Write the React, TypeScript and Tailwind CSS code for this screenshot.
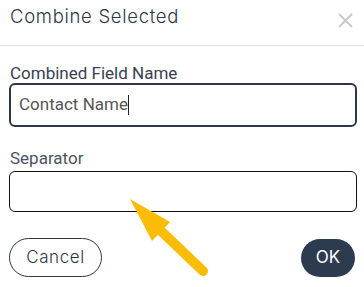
import React from 'react';

const App: React.FC = () => {
  const [separator, setSeparator] = React.useState('');

  return (
    <div className="relative w-[364px] h-[287px] bg-white overflow-hidden">
      <div className="h-[46px] flex items-start justify-between pl-[10px] pr-[11px] pt-[4px] border-b border-[#e6e6e6]">
        <h2
          className="text-[18.5px] leading-[24px] tracking-[0.7px] font-light text-[#2d3748]"
          style={{ fontFamily: 'Inter, sans-serif' }}
        >
          Combine Selected
        </h2>
        <button className="mt-[9px] text-[#c8c8c8]">
          <svg width="15" height="15" viewBox="0 0 15 15" fill="none" stroke="currentColor" strokeWidth="1.8">
            <path d="M1 1 L14 14 M14 1 L1 14" />
          </svg>
        </button>
      </div>

      <div className="px-[9px] pt-[17px]" style={{ fontFamily: 'Roboto, sans-serif' }}>
        <label className="block pl-[1px] text-[17px] leading-[20px] text-[#374151]">Combined Field Name</label>
        <div className="w-[348px] h-[44px] px-[8px] flex items-center border-2 border-[#2d3748] rounded-[6px] text-[17px] text-[#555]">
          <span>Contact Name</span>
          <span className="w-[1px] h-[20px] bg-[#222]" />
        </div>
        <label className="block mt-[21px] pl-[1px] text-[17px] leading-[20px] text-[#4a5260]">Separator</label>
        <input
          value={separator}
          onChange={(e) => setSeparator(e.target.value)}
          className="mt-[3px] w-[348px] h-[41px] px-[8px] border border-[#111] rounded-[6px] text-[17px] outline-none"
        />
        <div className="mt-[26px] flex items-center justify-between" style={{ fontFamily: 'Inter, sans-serif' }}>
          <button className="w-[93px] h-[39px] rounded-full border border-[#2d3748] text-[17px] tracking-[0.6px] font-light text-[#2d3748]">
            Cancel
          </button>
          <button className="w-[54px] h-[38px] rounded-full bg-[#2d3b4e] text-[17px] text-white">
            OK
          </button>
        </div>
      </div>

      <svg className="absolute left-0 top-0 pointer-events-none" width="364" height="287" viewBox="0 0 364 287">
        <polygon points="130,199 170,222 152,241" fill="#fbbc05" />
        <line x1="160" y1="230" x2="203" y2="271" stroke="#fbbc05" strokeWidth="10" strokeLinecap="round" />
      </svg>
    </div>
  );
};

export default App;
